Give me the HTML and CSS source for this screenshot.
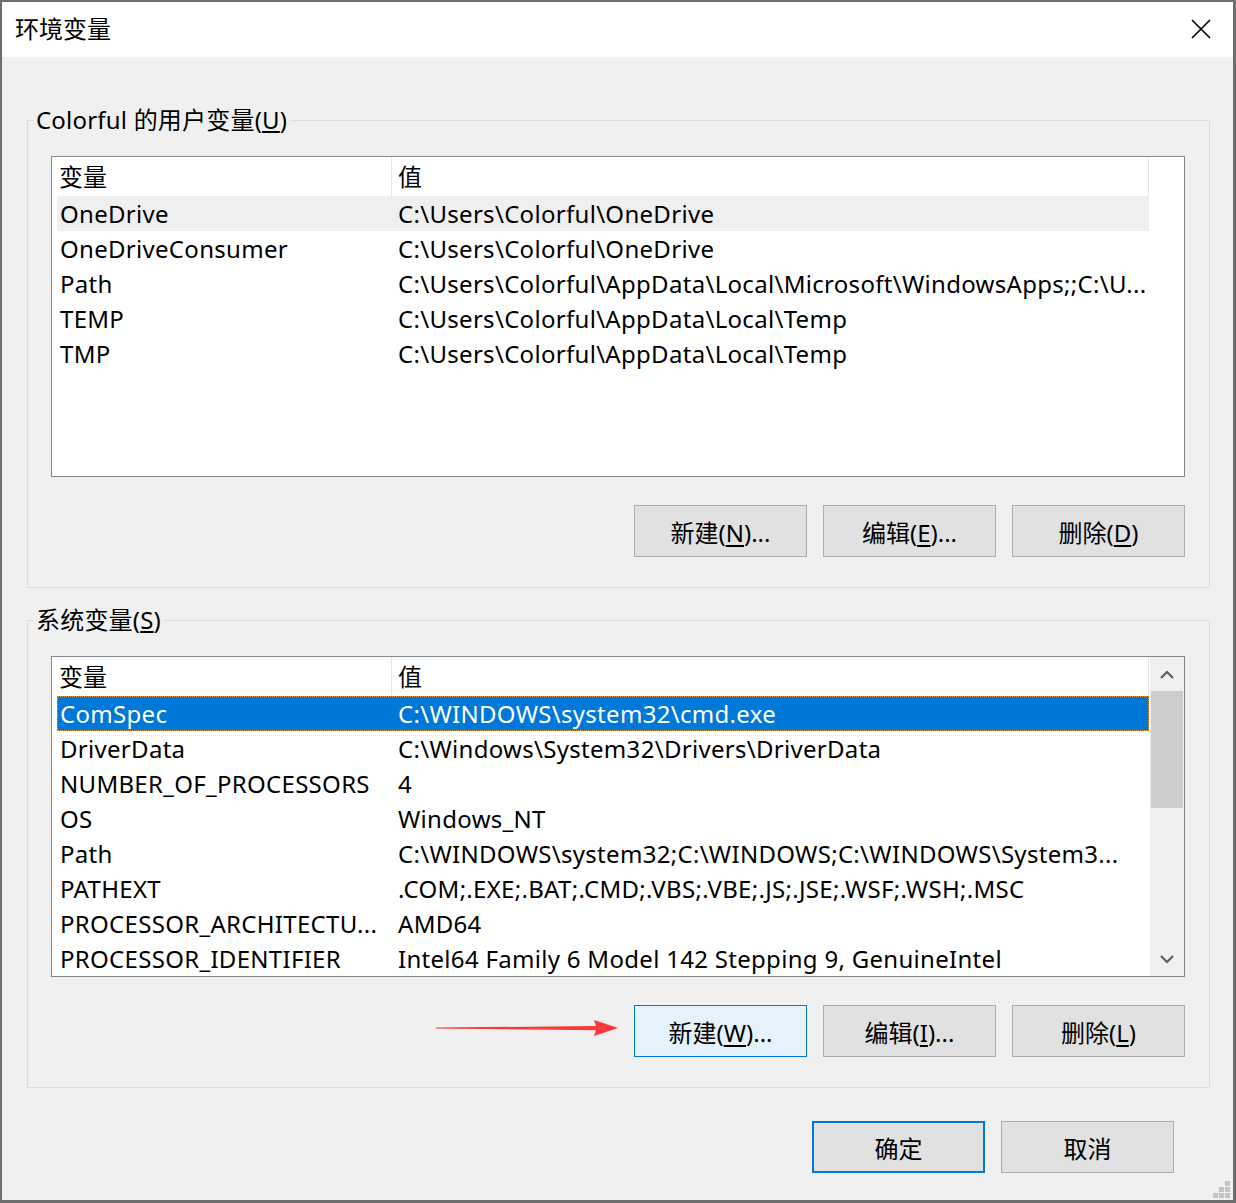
FILE: index.html
```html
<!DOCTYPE html>
<html lang="zh-CN">
<head>
    <meta charset="UTF-8">
    <title>环境变量</title>
    <link rel="stylesheet" href="styles.css">
</head>
<body>
    <div class="window">
        <div class="titlebar">
            <span class="title">环境变量</span>
            <svg class="close" width="20" height="20" viewBox="0 0 20 20">
                <path d="M1 1 L19 19 M19 1 L1 19" stroke="#000" stroke-width="1.6" fill="none"/>
            </svg>
        </div>

        <div class="content">
            <fieldset class="group">
                <legend>Colorful 的用户变量(<u>U</u>)</legend>
                <div class="group-body">
                    <div class="listview">
                        <div class="list-body">
                            <div class="list-header">
                                <div class="cell">变量</div>
                                <div class="cell">值</div>
                            </div>
                            <div class="row hover">
                                <div class="cell">OneDrive</div>
                                <div class="cell">C:\Users\Colorful\OneDrive</div>
                            </div>
                            <div class="row">
                                <div class="cell">OneDriveConsumer</div>
                                <div class="cell">C:\Users\Colorful\OneDrive</div>
                            </div>
                            <div class="row">
                                <div class="cell">Path</div>
                                <div class="cell">C:\Users\Colorful\AppData\Local\Microsoft\WindowsApps;;C:\U...</div>
                            </div>
                            <div class="row">
                                <div class="cell">TEMP</div>
                                <div class="cell">C:\Users\Colorful\AppData\Local\Temp</div>
                            </div>
                            <div class="row">
                                <div class="cell">TMP</div>
                                <div class="cell">C:\Users\Colorful\AppData\Local\Temp</div>
                            </div>
                        </div>
                    </div>
                    <div class="btn-row">
                        <button class="btn">新建(<u>N</u>)...</button>
                        <button class="btn">编辑(<u>E</u>)...</button>
                        <button class="btn">删除(<u>D</u>)</button>
                    </div>
                </div>
            </fieldset>

            <fieldset class="group">
                <legend>系统变量(<u>S</u>)</legend>
                <div class="group-body">
                    <div class="listview">
                        <div class="list-body">
                            <div class="list-header">
                                <div class="cell">变量</div>
                                <div class="cell">值</div>
                            </div>
                            <div class="row selected">
                                <div class="cell">ComSpec</div>
                                <div class="cell">C:\WINDOWS\system32\cmd.exe</div>
                            </div>
                            <div class="row">
                                <div class="cell">DriverData</div>
                                <div class="cell">C:\Windows\System32\Drivers\DriverData</div>
                            </div>
                            <div class="row">
                                <div class="cell">NUMBER_OF_PROCESSORS</div>
                                <div class="cell">4</div>
                            </div>
                            <div class="row">
                                <div class="cell">OS</div>
                                <div class="cell">Windows_NT</div>
                            </div>
                            <div class="row">
                                <div class="cell">Path</div>
                                <div class="cell">C:\WINDOWS\system32;C:\WINDOWS;C:\WINDOWS\System3...</div>
                            </div>
                            <div class="row">
                                <div class="cell">PATHEXT</div>
                                <div class="cell">.COM;.EXE;.BAT;.CMD;.VBS;.VBE;.JS;.JSE;.WSF;.WSH;.MSC</div>
                            </div>
                            <div class="row">
                                <div class="cell">PROCESSOR_ARCHITECTU...</div>
                                <div class="cell">AMD64</div>
                            </div>
                            <div class="row">
                                <div class="cell">PROCESSOR_IDENTIFIER</div>
                                <div class="cell">Intel64 Family 6 Model 142 Stepping 9, GenuineIntel</div>
                            </div>
                        </div>
                        <div class="scrollbar">
                            <div class="sb-arrow">
                                <svg width="14" height="9" viewBox="0 0 14 9"><path d="M1 8 L7 2 L13 8" stroke="#606060" stroke-width="2.2" fill="none"/></svg>
                            </div>
                            <div class="sb-track">
                                <div class="sb-thumb"></div>
                            </div>
                            <div class="sb-arrow">
                                <svg width="14" height="9" viewBox="0 0 14 9"><path d="M1 1 L7 7 L13 1" stroke="#606060" stroke-width="2.2" fill="none"/></svg>
                            </div>
                        </div>
                    </div>
                    <div class="btn-row">
                        <svg class="arrow" width="182" height="18" viewBox="0 0 182 18">
                            <path d="M0 8.6 L160 7 L158 1 L182 9 L158 17 L160 11.2 L0 9.4 Z" fill="#fb3737"/>
                        </svg>
                        <button class="btn active">新建(<u>W</u>)...</button>
                        <button class="btn">编辑(<u>I</u>)...</button>
                        <button class="btn">删除(<u>L</u>)</button>
                    </div>
                </div>
            </fieldset>

            <div class="footer">
                <button class="btn default">确定</button>
                <button class="btn">取消</button>
                <svg class="grip" width="18" height="17" viewBox="0 0 18 17">
                    <rect x="12" y="0" width="5" height="5" fill="#c4c4c4"/>
                    <rect x="6" y="6" width="5" height="5" fill="#c4c4c4"/>
                    <rect x="12" y="6" width="5" height="5" fill="#c4c4c4"/>
                    <rect x="0" y="12" width="5" height="5" fill="#c4c4c4"/>
                    <rect x="6" y="12" width="5" height="5" fill="#c4c4c4"/>
                    <rect x="12" y="12" width="5" height="5" fill="#c4c4c4"/>
                </svg>
            </div>
        </div>
    </div>
</body>
</html>
```

FILE: styles.css
```css
* {
    margin: 0;
    padding: 0;
    box-sizing: border-box;
}

body {
    font-family: 'Noto Sans', 'Noto Sans CJK SC', sans-serif;
    font-size: 24px;
    color: #000;
    background-color: #f0f0f0;
}

.window {
    width: 1236px;
    height: 1203px;
    border-style: solid;
    border-color: #6e6e6e;
    border-width: 2px 3px 3px 2px;
    background-color: #f0f0f0;
}

.titlebar {
    height: 55px;
    background-color: #fff;
    display: flex;
    align-items: center;
    justify-content: space-between;
    padding: 0 22px 0 13px;
}

.title {
    font-size: 24px;
    line-height: 30px;
    margin-top: -1px;
}

.close {
    margin-top: -1px;
}

.content {
    padding: 48px 23px 0 25px;
}

.group {
    border: 1px solid #dcdcdc;
    padding: 0;
    margin-bottom: 17px;
}

.group legend {
    margin-left: 5px;
    padding: 0 3px;
    line-height: 30px;
    letter-spacing: 0.2px;
}

.group-body {
    padding: 21px 24px 30px 23px;
}

.listview {
    height: 321px;
    border: 1px solid #828790;
    background-color: #fff;
    padding-left: 5px;
    display: flex;
    overflow: hidden;
}

.list-body {
    width: 1092px;
}

.list-header, .row {
    display: grid;
    grid-template-columns: 335px 757px;
    line-height: 35px;
}

.list-header {
    height: 39px;
    line-height: 39px;
}

.list-header .cell {
    border-right: 1px solid #e5e5e5;
    padding-left: 2px;
}

.list-header .cell + .cell {
    padding-left: 6px;
}

.cell {
    white-space: nowrap;
    overflow: hidden;
    text-overflow: ellipsis;
    padding-left: 3px;
}

.row .cell {
    letter-spacing: 0.3px;
}

.row .cell + .cell {
    padding-left: 6px;
}

.row {
    height: 35px;
}

.row.hover {
    background-color: #efefef;
}

.row.selected {
    background-color: #0078d7;
    color: #fff;
    outline: 1px dotted #e9a04a;
    outline-offset: -1px;
}

.scrollbar {
    width: 34px;
    margin-left: auto;
    background-color: #f0f0f0;
    display: flex;
    flex-direction: column;
}

.sb-arrow {
    height: 34px;
    display: flex;
    align-items: center;
    justify-content: center;
}

.sb-track {
    flex: 1;
    padding: 0 1px;
}

.sb-thumb {
    height: 117px;
    background-color: #cdcdcd;
}

.btn-row {
    display: flex;
    justify-content: flex-end;
    align-items: center;
    gap: 16px;
    margin-top: 28px;
}

.btn {
    flex: none;
    width: 173px;
    height: 52px;
    font-family: inherit;
    font-size: 24px;
    color: #000;
    background-color: #e1e1e1;
    border: 1px solid #adadad;
}

.btn.active {
    background-color: #e5f1fb;
    border-color: #0078d7;
}

.btn.default {
    border: 2px solid #0078d7;
}

.btn u {
    text-underline-offset: 3px;
}

.arrow {
    margin-bottom: 6px;
}

.footer {
    display: flex;
    justify-content: flex-end;
    align-items: flex-start;
    gap: 16px;
    margin-top: 33px;
}

.grip {
    flex: none;
    margin-left: 23px;
    margin-right: -21px;
    margin-top: 60px;
}
```
